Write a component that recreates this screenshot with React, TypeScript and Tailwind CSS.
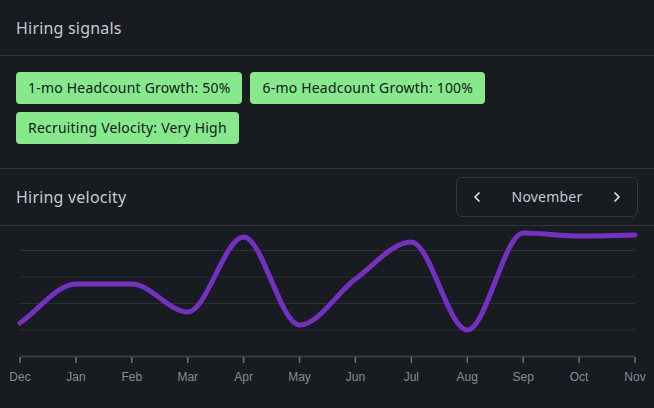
import { ChevronLeft, ChevronRight } from "lucide-react";

const months = ["Dec", "Jan", "Feb", "Mar", "Apr", "May", "Jun", "Jul", "Aug", "Sep", "Oct", "Nov"];
// pixel y of each point, measured against the chart box (top = 0)
const values = [97, 58, 58, 86, 11, 99, 53, 16, 104, 7, 10, 9];

const signals = [
    "1-mo Headcount Growth: 50%",
    "6-mo Headcount Growth: 100%",
    "Recruiting Velocity: Very High",
];

const X0 = 20;
const X1 = 635;

// d3 style monotone-x curve
function monotonePath(pts: [number, number][]) {
    const n = pts.length;
    const dx: number[] = [];
    const slope: number[] = [];
    for (let i = 0; i < n - 1; i++) {
        dx[i] = pts[i + 1][0] - pts[i][0];
        slope[i] = (pts[i + 1][1] - pts[i][1]) / dx[i];
    }
    const t: number[] = [];
    t[0] = slope[0];
    t[n - 1] = slope[n - 2];
    for (let i = 1; i < n - 1; i++) {
        if (slope[i - 1] * slope[i] <= 0) {
            t[i] = 0;
        } else {
            const h0 = dx[i - 1];
            const h1 = dx[i];
            const p = (slope[i - 1] * h1 + slope[i] * h0) / (h0 + h1);
            t[i] = (Math.sign(slope[i - 1]) + Math.sign(slope[i])) *
                Math.min(Math.abs(slope[i - 1]), Math.abs(slope[i]), 0.5 * Math.abs(p)) || 0;
        }
    }
    let d = `M${pts[0][0]},${pts[0][1]}`;
    for (let i = 0; i < n - 1; i++) {
        const h = dx[i] / 3;
        d += ` C${pts[i][0] + h},${pts[i][1] + h * t[i]} ${pts[i + 1][0] - h},${pts[i + 1][1] - h * t[i + 1]} ${pts[i + 1][0]},${pts[i + 1][1]}`;
    }
    return d;
}

function VelocityChart() {
    const step = (X1 - X0) / (months.length - 1);
    const pts = values.map((v, i) => [X0 + i * step, v] as [number, number]);
    const grid = [24.5, 51, 77.5, 104];

    return (
        <svg width={654} height={182} className="block tracking-normal">
            {grid.map((y) => (
                <line key={y} x1={X0} x2={X1} y1={y} y2={y} stroke="#2c3139" strokeWidth={1} />
            ))}
            <line x1={X0} x2={X1} y1={130.5} y2={130.5} stroke="#3a3f47" strokeWidth={2} />
            {months.map((m, i) => (
                <g key={m}>
                    <line x1={X0 + i * step} x2={X0 + i * step} y1={131} y2={137} stroke="#6b7079" strokeWidth={1.5} />
                    <text
                        x={X0 + i * step}
                        y={155}
                        textAnchor="middle"
                        fill="#868b94"
                        fontSize={12}
                        fontFamily='"Liberation Sans", Arial, sans-serif'
                    >
                        {m}
                    </text>
                </g>
            ))}
            <path d={monotonePath(pts)} fill="none" stroke="#7430c2" strokeWidth={5} strokeLinecap="round" />
        </svg>
    );
}

export default function App() {
    return (
        <div
            className="w-[654px] h-[408px] bg-[#181b20] text-[#c5cad2] overflow-hidden tracking-[0.2px]"
            style={{ fontFamily: '"Noto Sans", "Open Sans", sans-serif' }}
        >
            <div className="h-[56px] flex items-center px-4 border-b border-[#31363e]">
                <h2 className="text-base">Hiring signals</h2>
            </div>

            <div className="pt-4 pb-6 px-4 flex flex-wrap gap-2 border-b border-[#31363e]">
                {signals.map((s) => (
                    <span
                        key={s}
                        className="h-8 px-3 flex items-center rounded bg-[#86e98c] text-[#15181c] text-sm"
                    >
                        {s}
                    </span>
                ))}
            </div>

            <div className="h-[57px] flex items-center justify-between pl-4 pr-4 border-b border-[#31363e]">
                <h2 className="text-base">Hiring velocity</h2>
                <div className="w-[182px] h-10 flex items-center justify-between px-3 rounded-md border border-[#31363e]">
                    <ChevronLeft size={16} strokeWidth={2.5} className="text-[#e5e7eb]" />
                    <span className="text-sm">November</span>
                    <ChevronRight size={16} strokeWidth={2.5} className="text-[#e5e7eb]" />
                </div>
            </div>

            <VelocityChart />
        </div>
    );
}
